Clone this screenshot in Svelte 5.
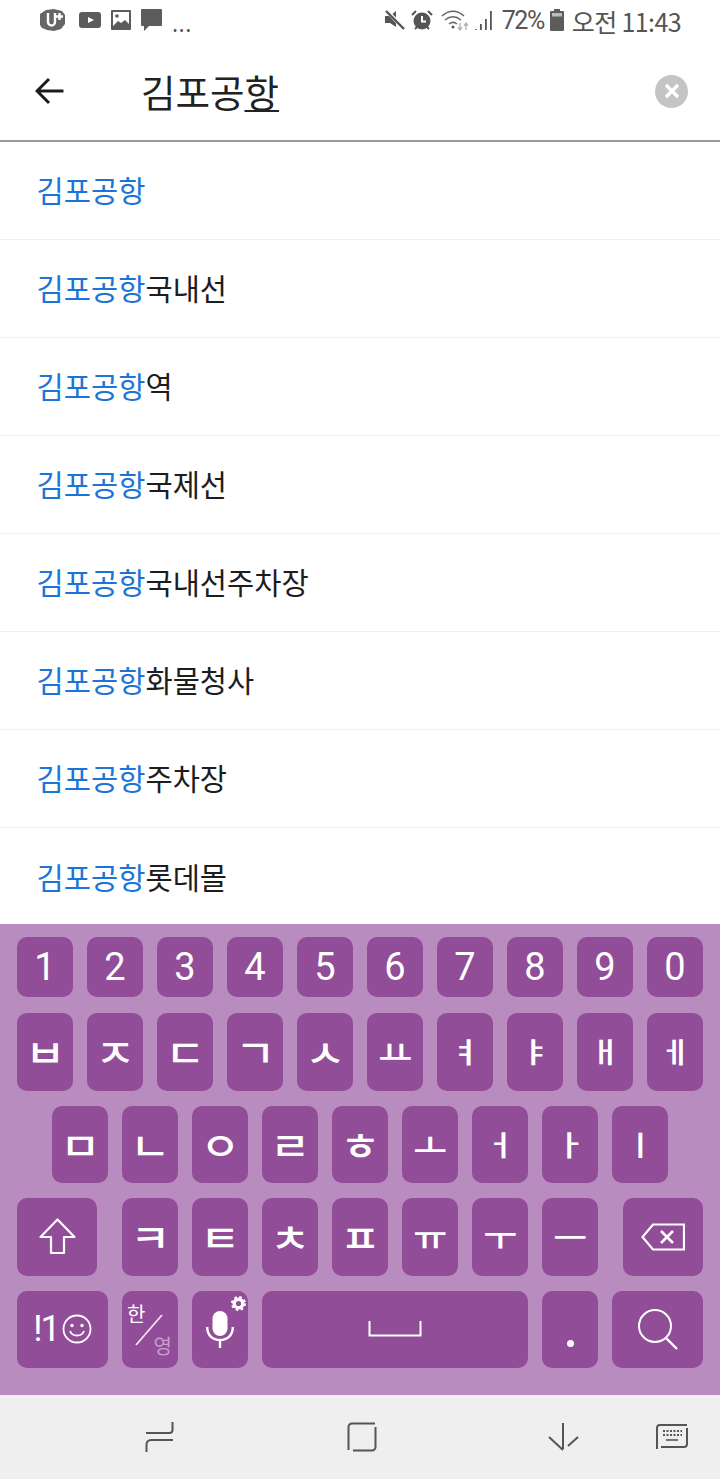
<script>
    const results = ['', '국내선', '역', '국제선', '국내선주차장', '화물청사', '주차장', '롯데몰'];
    const numbers = ['1', '2', '3', '4', '5', '6', '7', '8', '9', '0'];
    const row2 = ['ㅂ', 'ㅈ', 'ㄷ', 'ㄱ', 'ㅅ', 'ㅛ', 'ㅕ', 'ㅑ', 'ㅐ', 'ㅔ'];
    const row3 = ['ㅁ', 'ㄴ', 'ㅇ', 'ㄹ', 'ㅎ', 'ㅗ', 'ㅓ', 'ㅏ', 'ㅣ'];
    const row4 = ['ㅋ', 'ㅌ', 'ㅊ', 'ㅍ', 'ㅠ', 'ㅜ', 'ㅡ'];

    // the keyboard's jamo are drawn wider than the font's, vowels differ from consonants
    function jamoClass(k) {
        if ('ㅕㅑㅐㅔㅓㅏㅣ'.includes(k)) return 'jamo upright';
        if ('ㅛㅗㅠㅜㅡ'.includes(k)) return 'jamo flat';
        return 'jamo';
    }
</script>

<div class="phone">
    <!-- Status bar -->
    <div class="status">
        <div class="status-left">
            <svg class="ic" width="26" height="22" viewBox="0 0 26 22">
                <path d="M6 1l8-1 8 2 3 4v9l-4 5-7 2-7-1-5-2-2-3V5z" fill="#666"/>
                <path d="M8 4v9a3.500 3.500 0 0 0 7 0V4" fill="none" stroke="#fff" stroke-width="2.400"/>
                <path d="M19.500 4v7M16 7.500h7" stroke="#fff" stroke-width="2.400"/>
            </svg>
            <svg class="ic" width="22" height="16" viewBox="0 0 22 16">
                <rect width="22" height="16" rx="3" fill="#5c5c5c"/>
                <path d="M9 5l6 3-6 3z" fill="#fff"/>
            </svg>
            <svg class="ic" width="20" height="20" viewBox="0 0 20 20">
                <rect width="20" height="20" rx="1" fill="#5c5c5c"/>
                <rect x="2" y="2" width="16" height="16" fill="#fff"/>
                <circle cx="6" cy="6" r="1.800" fill="#5c5c5c"/>
                <path d="M2 16l5-5 3 2 4-3 4 4v4H2z" fill="#5c5c5c"/>
            </svg>
            <svg class="ic" width="21" height="22" viewBox="0 0 21 22">
                <path d="M1 0h19a1 1 0 0 1 1 1v15a1 1 0 0 1-1 1H8l-5 5v-5H1a1 1 0 0 1-1-1V1a1 1 0 0 1 1-1z" fill="#5c5c5c"/>
            </svg>
            <span class="dots">...</span>
        </div>
        <div class="status-right">
            <svg class="ic" width="22" height="22" viewBox="0 0 22 22">
                <path d="M1 7h5l6-5v16l-6-4H1z" fill="#555"/>
                <path d="M3 2l17 18" stroke="#fff" stroke-width="4"/>
                <path d="M2 2l18 18" stroke="#555" stroke-width="2.400"/>
            </svg>
            <svg class="ic" width="22" height="22" viewBox="0 0 22 22">
                <circle cx="11" cy="12" r="8.500" fill="#555"/>
                <path d="M11 7v5.500h4" fill="none" stroke="#fff" stroke-width="2"/>
                <path d="M1 6l4-4M21 6l-4-4M4 20l2-2M18 20l-2-2" stroke="#555" stroke-width="2"/>
            </svg>
            <svg class="ic wifi" width="28" height="22" viewBox="0 0 28 22">
                <path d="M1 7c7-6 15-6 22 0M4 11c5-4 11-4 16 0M8 15c2.500-2 5.500-2 8 0" fill="none" stroke="#666" stroke-width="1.600"/>
                <circle cx="12" cy="18" r="1.500" fill="#555"/>
                <path d="M19 14v6M17 18l2 3 2-3" fill="none" stroke="#aaa" stroke-width="1.200"/>
                <path d="M25 21v-6M23 17l2-3 2 3" fill="none" stroke="#aaa" stroke-width="1.200"/>
            </svg>
            <svg class="ic" width="20" height="22" viewBox="0 0 20 22">
                <path d="M1 20h1.500v1H1zM6 15h1.800v6H6zM11 10h1.800v11H11zM16 2h1.800v19H16z" fill="#555"/>
            </svg>
            <span class="pct">72%</span>
            <svg class="ic batt" width="14" height="22" viewBox="0 0 14 22">
                <path d="M4 0h6v2h3a1 1 0 0 1 1 1v18a1 1 0 0 1-1 1H1a1 1 0 0 1-1-1V3a1 1 0 0 1 1-1h3z" fill="#5c5c5c"/>
                <rect x="2" y="4" width="10" height="3.500" fill="#bbb"/>
            </svg>
            <span class="clock">오전 11:43</span>
        </div>
    </div>

    <!-- Search field -->
    <div class="search">
        <svg class="back" width="29" height="28" viewBox="0 0 29 28">
            <path d="M28.500 14H3M14 2L2 14l12 12" fill="none" stroke="#1c1c1c" stroke-width="3"/>
        </svg>
        <div class="query">김포공<u>항</u></div>
        <div class="clear">
            <svg width="16" height="16" viewBox="0 0 16 16">
                <path d="M2 2l12 12M14 2L2 14" stroke="#fff" stroke-width="3.400"/>
            </svg>
        </div>
    </div>

    <!-- Suggestions -->
    <ul class="list">
        {#each results as rest}
        <li><span class="hit">김포공항</span>{rest}</li>
        {/each}
    </ul>

    <!-- Keyboard -->
    <div class="keyboard">
        <div class="row num">
            {#each numbers as k}
            <div class="key">{k}</div>
            {/each}
        </div>
        <div class="row tall">
            {#each row2 as k}
            <div class="key"><span class={jamoClass(k)}>{k}</span></div>
            {/each}
        </div>
        <div class="row tall center">
            {#each row3 as k}
            <div class="key"><span class={jamoClass(k)}>{k}</span></div>
            {/each}
        </div>
        <div class="row tall split">
            <div class="key wide">
                <svg width="37" height="37" viewBox="0 0 37 37">
                    <path d="M18.500 1.500L1.500 19h10.500v16h13V19H35.500z" fill="none" stroke="#fff" stroke-width="2.200" stroke-linejoin="round"/>
                </svg>
            </div>
            <div class="group">
                {#each row4 as k}
                <div class="key"><span class={jamoClass(k)}>{k}</span></div>
                {/each}
            </div>
            <div class="key wide">
                <svg width="44" height="28" viewBox="0 0 44 28">
                    <path d="M43 1.500H12L1.500 14 12 26.500h31z" fill="none" stroke="#fff" stroke-width="2.200"/>
                    <path d="M20 8l12 12M32 8L20 20" stroke="#fff" stroke-width="2.600"/>
                </svg>
            </div>
        </div>
        <div class="row tall bottom">
            <div class="key sym">
                <span>!1</span>
                <svg width="30" height="30" viewBox="0 0 30 30">
                    <circle cx="15" cy="15" r="13.500" fill="none" stroke="#fff" stroke-width="1.800"/>
                    <circle cx="10" cy="11.500" r="1.700" fill="#fff"/>
                    <circle cx="20" cy="11.500" r="1.700" fill="#fff"/>
                    <path d="M8 17c2 6 12 6 14 0" fill="none" stroke="#fff" stroke-width="1.800"/>
                </svg>
            </div>
            <div class="key lang">
                <span class="han">한</span>
                <svg class="slash" width="28" height="32" viewBox="0 0 28 32">
                    <path d="M1 31L27 1" stroke="#f3e6f4" stroke-width="1.800"/>
                </svg>
                <span class="eng">영</span>
            </div>
            <div class="key mic">
                <svg width="28" height="37" viewBox="0 0 28 37">
                    <rect x="6.500" y="0" width="15" height="25" rx="7.500" fill="#fff"/>
                    <path d="M1.200 16c0 9 6 13 12.800 13s12.800-4 12.800-13M14 29v8" fill="none" stroke="#fff" stroke-width="2.400"/>
                </svg>
                <svg class="gear" width="15" height="15" viewBox="0 0 15 15">
                    <circle cx="7.500" cy="7.500" r="4.300" fill="none" stroke="#fff" stroke-width="3.400"/>
                    <circle cx="7.500" cy="7.500" r="6.300" fill="none" stroke="#fff" stroke-width="2.400" stroke-dasharray="2.500 2.450"/>
                </svg>
            </div>
            <div class="key space">
                <svg width="54" height="16" viewBox="0 0 54 16">
                    <path d="M1.500 0v14.500h51V0" fill="none" stroke="#fff" stroke-width="2"/>
                </svg>
            </div>
            <div class="key dot"><i></i></div>
            <div class="key go">
                <svg width="42" height="42" viewBox="0 0 42 42">
                    <circle cx="18" cy="18" r="16" fill="none" stroke="#fff" stroke-width="2"/>
                    <path d="M29 30l11 11" stroke="#fff" stroke-width="2.400"/>
                </svg>
            </div>
        </div>
    </div>

    <!-- Navigation bar -->
    <div class="nav">
        <svg class="n1" width="29" height="30" viewBox="0 0 29 30">
            <path d="M27.500 0v8a3 3 0 0 1-3 3H1M28 18H6a4.500 4.500 0 0 0-4.500 4.500V30" fill="none" stroke="#555" stroke-width="2"/>
        </svg>
        <svg class="n2" width="30" height="30" viewBox="0 0 30 30">
            <path d="M28 1.500H5a3.500 3.500 0 0 0-3.500 3.500v23" fill="none" stroke="#555" stroke-width="2"/>
            <path d="M28.500 5v20a3.500 3.500 0 0 1-3.500 3.500H6" fill="none" stroke="#555" stroke-width="2"/>
        </svg>
        <svg class="n3" width="32" height="28" viewBox="0 0 32 28">
            <path d="M15 0v26M1 14l14 13M20 23l10-9" fill="none" stroke="#555" stroke-width="2"/>
        </svg>
        <svg class="n4" width="32" height="26" viewBox="0 0 32 26">
            <path d="M31 1H4a3 3 0 0 0-3 3v21" fill="none" stroke="#555" stroke-width="2"/>
            <path d="M31 4v16a3 3 0 0 1-3 3H5" fill="none" stroke="#555" stroke-width="2"/>
            <path d="M7 7h19M7 11h19" stroke="#555" stroke-width="2" stroke-dasharray="2 1.500"/>
            <path d="M10 16h12" stroke="#555" stroke-width="1.600"/>
        </svg>
    </div>
</div>

<style>
    :global(body) {
        margin: 0;
        background: #fff;
    }

    .phone {
        width: 720px;
        height: 1479px;
        display: flex;
        flex-direction: column;
        overflow: hidden;
        font-family: "Noto Sans CJK KR", "Noto Sans", sans-serif;
    }

    /* Status bar */
    .status {
        height: 40px;
        flex: none;
        display: flex;
        align-items: center;
        justify-content: space-between;
        padding: 0 39px 0 40px;
        color: #555;
    }

    .status-left,
    .status-right {
        display: flex;
        align-items: center;
    }

    .status-left {
        gap: 10px;
    }

    .status-left .ic:first-child {
        margin-right: 3px;
    }

    .status-right {
        gap: 5px;
    }

    .ic {
        display: block;
        flex: none;
    }

    .wifi {
        margin-left: 3px;
    }

    .batt {
        margin-left: 1px;
    }

    .dots {
        font-size: 22px;
        line-height: 20px;
        margin-top: 3px;
        letter-spacing: 0.5px;
    }

    .pct {
        font-family: Roboto, sans-serif;
        font-size: 25px;
        line-height: 30px;
        letter-spacing: -1.5px;
        margin-left: 3px;
        margin-top: 2px;
    }

    .clock {
        font-size: 25px;
        line-height: 30px;
        letter-spacing: -0.6px;
        margin-left: 3px;
        margin-top: 2px;
    }

    /* Search field */
    .search {
        height: 102px;
        flex: none;
        box-sizing: border-box;
        display: flex;
        align-items: center;
        padding: 2px 32px 0 35px;
        border-bottom: 2px solid #999;
    }

    .back {
        flex: none;
    }

    .query {
        flex: 1;
        margin-left: 77px;
        font-size: 37.5px;
        line-height: 1;
        color: #222;
    }

    .query u {
        text-underline-offset: 3px;
        text-decoration-thickness: 2px;
    }

    .clear {
        width: 33px;
        height: 33px;
        border-radius: 50%;
        background: #c4c4c4;
        display: flex;
        align-items: center;
        justify-content: center;
    }

    /* Suggestions */
    .list {
        list-style: none;
        margin: 0;
        padding: 0;
        flex: 1;
        min-height: 0;
        overflow: hidden;
    }

    .list li {
        height: 98px;
        box-sizing: border-box;
        padding: 0 0 2px 36.5px;
        display: flex;
        align-items: center;
        font-size: 29.6px;
        color: #1d1d1d;
        border-bottom: 1px solid #f1f1f1;
    }

    .list li:last-child {
        border-bottom: none;
    }

    .hit {
        color: #1b75d9;
    }

    /* Keyboard */
    .keyboard {
        height: 471px;
        flex: none;
        box-sizing: border-box;
        background: #b98cbf;
        padding: 13px 17px 0;
        display: flex;
        flex-direction: column;
        gap: 15px;
    }

    .row {
        display: flex;
        gap: 14px;
    }

    .row.num {
        margin-bottom: 1px;
    }

    .row.center {
        justify-content: center;
    }

    .row.split {
        justify-content: space-between;
    }

    .group {
        display: flex;
        gap: 14px;
    }

    .key {
        width: 56px;
        height: 60px;
        flex: none;
        position: relative;
        box-sizing: border-box;
        border-radius: 10px;
        background: #914d98;
        color: #fff;
        display: flex;
        align-items: center;
        justify-content: center;
        font-size: 38px;
        line-height: 1;
    }

    .num .key {
        font-family: Roboto, sans-serif;
    }

    .tall .key {
        height: 77.5px;
        font-size: 33px;
        font-weight: 500;
    }

    .jamo {
        display: inline-block;
        transform: scale(1.32, 1.15);
    }

    .jamo.flat {
        transform: scale(1.12, 1);
    }

    .jamo.upright {
        transform: scale(1.1, 0.85);
    }

    .key.wide {
        width: 80px;
    }

    .tall .key.sym {
        width: 91px;
        font-family: Roboto, sans-serif;
        font-size: 36px;
        font-weight: 400;
        letter-spacing: -2px;
        gap: 3px;
    }

    .tall .key.lang {
        display: block;
        font-size: 20px;
        font-weight: 400;
    }

    .han,
    .eng,
    .slash,
    .gear {
        position: absolute;
    }

    .han {
        left: 5px;
        top: 13px;
    }

    .eng {
        right: 6px;
        bottom: 12px;
        color: #c99fd0;
    }

    .slash {
        left: 13px;
        top: 23px;
    }

    .gear {
        right: 2.5px;
        top: 5px;
    }

    .key.space {
        width: 266px;
    }

    .key.dot i {
        width: 7px;
        height: 7px;
        border-radius: 50%;
        background: #fff;
        margin-top: 28px;
    }

    .key.go {
        width: 91px;
    }

    /* Navigation bar */
    .nav {
        height: 84px;
        flex: none;
        box-sizing: border-box;
        background: #efeff0;
        display: flex;
        align-items: center;
    }

    .n1 {
        margin-left: 145px;
    }

    .n2 {
        margin-left: 173px;
    }

    .n3 {
        margin-left: 171px;
    }

    .n4 {
        margin-left: 76px;
    }
</style>
